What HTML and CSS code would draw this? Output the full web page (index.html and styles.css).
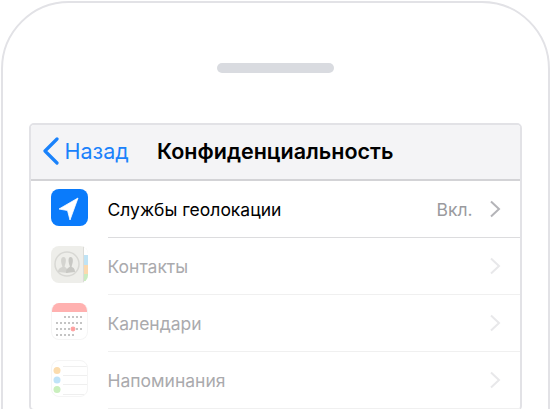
FILE: index.html
```html
<!DOCTYPE html>
<html lang="ru">
<head>
    <meta charset="UTF-8">
    <meta name="viewport" content="width=device-width, initial-scale=1.0">
    <title>Конфиденциальность</title>
    <link rel="stylesheet" href="styles.css">
</head>
<body>

<div class="phone">
    <div class="speaker"></div>

    <div class="screen">
        <div class="nav">
            <a class="back" href="#">
                <svg class="back-icon" width="19" height="28" viewBox="0 0 19 28">
                    <path d="M16 2 L4 14 L16 26" fill="none" stroke="#1a82fb" stroke-width="3.2" stroke-linecap="round" stroke-linejoin="round"/>
                </svg>
                Назад
            </a>
            <h1>Конфиденциальность</h1>
        </div>

        <div class="row">
            <div class="app-icon icon-location">
                <svg width="37" height="37" viewBox="0 0 37 37">
                    <path d="M8 20 L27 9 L19 31 L16.500 21.500 Z" fill="#fff" stroke="#fff" stroke-width="0.8" stroke-linejoin="round"/>
                </svg>
            </div>
            <div class="row-body">
                <span class="row-title">Службы геолокации</span>
                <span class="row-value">Вкл.</span>
                <svg class="chevron" width="13" height="18" viewBox="0 0 13 18">
                    <path d="M2 1.500 L10 9 L2 16.500" fill="none" stroke="#b4b4b8" stroke-width="2"/>
                </svg>
            </div>
        </div>

        <div class="row row-off">
            <div class="app-icon icon-contacts">
                <svg width="37" height="37" viewBox="0 0 37 37">
                    <rect width="37" height="37" fill="#eeeeea"/>
                    <rect x="33" y="9" width="4" height="10" fill="#bfe3f5"/>
                    <rect x="33" y="19" width="4" height="9" fill="#fbd9ae"/>
                    <rect x="33" y="28" width="4" height="7" fill="#c9ecc0"/>
                    <rect x="33" y="35" width="4" height="2" fill="#fff"/>
                    <rect x="33" y="0" width="4" height="9" fill="#fff"/>
                    <rect x="32" y="0" width="1" height="37" fill="#dcdcd8"/>
                    <circle cx="16" cy="18" r="12" fill="none" stroke="#d8d8d4" stroke-width="1.500"/>
                    <path d="M7 26 C7 22 10 22 11.500 20.500 C9.500 16 9.500 11 12.500 11 C15.500 11 15.500 16 13.500 20.500 C15 22 17 22.500 17 27 Z" fill="#d4d4d0"/>
                    <path d="M15 27 C15 22 17.500 22 19 20.500 C17 16 17 11 19.500 11 C22.500 11 22.500 16 20.500 20.500 C22 22 24 22 24 26 Z" fill="#c8c8c4"/>
                </svg>
            </div>
            <div class="row-body">
                <span class="row-title">Контакты</span>
                <svg class="chevron" width="13" height="18" viewBox="0 0 13 18">
                    <path d="M2 1.500 L10 9 L2 16.500" fill="none" stroke="#e8e8ea" stroke-width="2"/>
                </svg>
            </div>
        </div>

        <div class="row row-off">
            <div class="app-icon icon-calendar">
                <div class="cal-top"></div>
                <div class="cal-grid" id="cal-grid"></div>
            </div>
            <div class="row-body">
                <span class="row-title">Календари</span>
                <svg class="chevron" width="13" height="18" viewBox="0 0 13 18">
                    <path d="M2 1.500 L10 9 L2 16.500" fill="none" stroke="#e8e8ea" stroke-width="2"/>
                </svg>
            </div>
        </div>

        <div class="row row-off">
            <div class="app-icon icon-reminders">
                <svg width="37" height="37" viewBox="0 0 37 37">
                    <path d="M11 5.500 H37 M11 14.500 H37 M11 23.500 H37 M11 33.500 H37" stroke="#efefef" stroke-width="1"/>
                    <circle cx="5" cy="9.500" r="3.500" fill="#fbdcae"/>
                    <circle cx="5" cy="19" r="3.500" fill="#bfe3f8"/>
                    <circle cx="5" cy="28.500" r="3.500" fill="#c9efbd"/>
                </svg>
            </div>
            <div class="row-body">
                <span class="row-title">Напоминания</span>
                <svg class="chevron" width="13" height="18" viewBox="0 0 13 18">
                    <path d="M2 1.500 L10 9 L2 16.500" fill="none" stroke="#e8e8ea" stroke-width="2"/>
                </svg>
            </div>
        </div>
    </div>
</div>

<script>
    // calendar dots: rows of 7, blanks left out, today is marked
    var calRows = ['..11111', '1111111', '1111111', '11111..'];
    var grid = document.getElementById('cal-grid');
    calRows.forEach(function (row, r) {
        row.split('').forEach(function (c, i) {
            var dot = document.createElement('i');
            dot.className = 'cal-dot';
            if (c === '.') dot.className += ' cal-blank';
            if (r === 2 && i === 4) dot.className += ' cal-today';
            grid.appendChild(dot);
        });
    });
</script>

</body>
</html>
```

FILE: styles.css
```css
html, body {
    margin: 0;
    height: 409px;
    overflow: hidden;
    background: #fff;
}

body {
    font-family: 'Inter', 'Liberation Sans', sans-serif;
    color: #000;
}

.phone {
    box-sizing: border-box;
    width: 549px;
    height: 600px;
    margin: 1px 0 0 1px;
    padding: 60px 25.500px 0;
    border: 2.500px solid #e2e2e6;
    border-radius: 68px;
    background: #fff;
}

.speaker {
    width: 117px;
    height: 10px;
    margin: 0 auto 50px;
    border-radius: 5px;
    background: #d9dbe0;
}

.screen {
    width: 493px;
    box-sizing: border-box;
    border: 2px solid #e2e2e6;
    border-radius: 5px;
    background: #fff;
}

.nav {
    display: flex;
    align-items: center;
    height: 52px;
    padding-bottom: 2px;
    border-bottom: 2px solid #d3d3d6;
    background: #f4f4f6;
    border-radius: 3px 3px 0 0;
}

.back {
    display: flex;
    align-items: center;
    gap: 5px;
    margin-left: 10px;
    width: 116.500px;
    font-size: 21.500px;
    color: #1a82fb;
    text-decoration: none;
}

.nav h1 {
    margin: 0;
    font-size: 21.500px;
    font-weight: 600;
}

.row {
    display: flex;
    height: 57px;
}

.app-icon {
    box-sizing: border-box;
    flex: none;
    width: 37px;
    height: 37px;
    margin: 8px 20px 0;
    border-radius: 8px;
    overflow: hidden;
}

.app-icon svg {
    display: block;
}

.row-body {
    flex: 1;
    display: flex;
    align-items: center;
    height: 56px;
    padding-right: 18px;
    border-bottom: 1px solid #dcdcde;
}

.row-title {
    flex: 1;
    font-size: 17.500px;
}

.row-value {
    margin-right: 16px;
    font-size: 17.500px;
    color: #9a9a9e;
}

.row-off .row-title {
    color: #aaaaad;
}

.row-off .row-body {
    border-bottom-color: #f0f0f0;
}

.icon-location {
    background: #0a7bfb;
}

.icon-calendar {
    border: 1px solid #f5f5f5;
    border-top: 0;
}

.cal-top {
    height: 9px;
    background: #ffb1b0;
}

.cal-grid {
    display: grid;
    grid-template-columns: repeat(7, 2px);
    gap: 4px 2px;
    justify-content: center;
    padding-top: 4px;
}

.cal-dot {
    width: 2px;
    height: 2px;
    background: #c4c4c4;
}

.cal-blank {
    background: transparent;
}

.cal-today {
    background: #ff9d9d;
    box-shadow: 0 0 0 1.500px #ffa5a5;
    border-radius: 50%;
}

.icon-reminders {
    border: 1px solid #f5f5f5;
}
```
